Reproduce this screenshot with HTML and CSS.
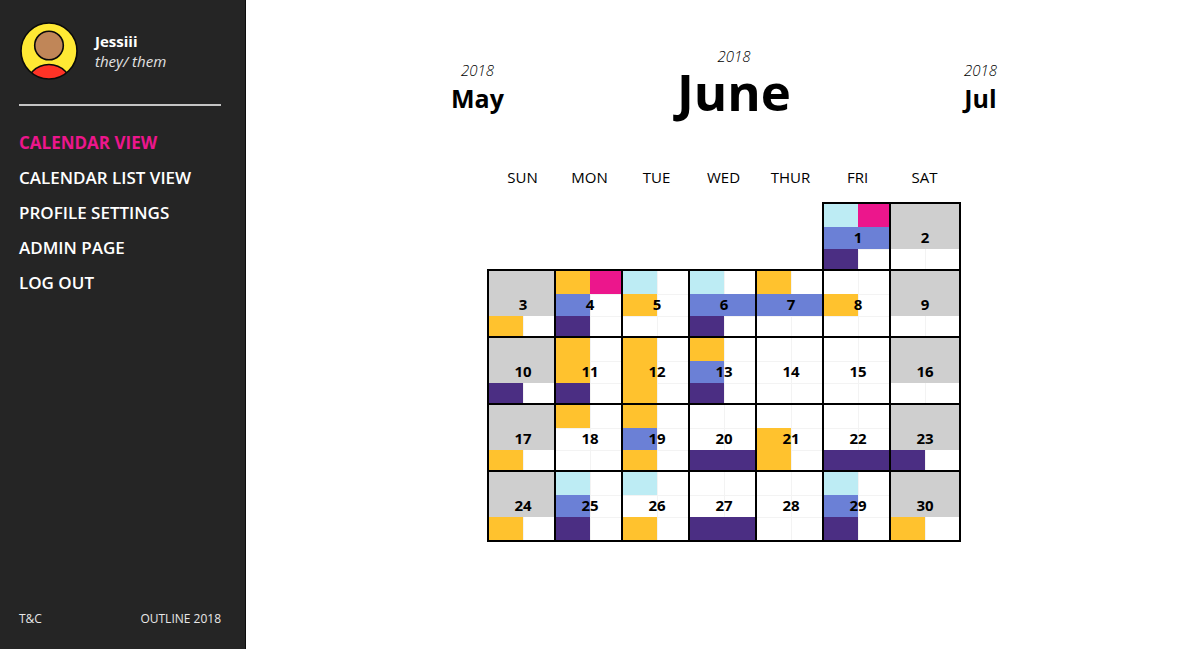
FILE: index.html
```html
<!DOCTYPE html>
<html lang="en">
<head>
<meta charset="utf-8">
<meta name="viewport" content="width=device-width, initial-scale=1">
<title>Calendar View</title>
<link rel="stylesheet" href="styles.css">
</head>
<body>
<aside class="sidebar">
  <header class="profile">
    <svg class="avatar" viewBox="0 0 58 58" aria-hidden="true">
      <defs><clipPath id="face"><circle cx="29" cy="29" r="28"/></clipPath></defs>
      <circle cx="29" cy="29" r="28" fill="#ffe934"/>
      <circle cx="29" cy="65.500" r="23" fill="#ff3326" stroke="#0a0a0a" stroke-width="1.600" clip-path="url(#face)"/>
      <circle cx="29" cy="23.500" r="14.300" fill="#c08658" stroke="#0a0a0a" stroke-width="1.600"/>
      <circle cx="29" cy="29" r="28" fill="none" stroke="#0a0a0a" stroke-width="1.600"/>
    </svg>
    <div>
      <p class="name">Jessiii</p>
      <p class="pronouns">they/ them</p>
    </div>
  </header>
  <nav class="menu">
    <a class="active" href="#calendar" aria-current="page">CALENDAR VIEW</a>
    <a href="#list">CALENDAR LIST VIEW</a>
    <a href="#profile">PROFILE SETTINGS</a>
    <a href="#admin">ADMIN PAGE</a>
    <a href="#logout">LOG OUT</a>
  </nav>
  <footer class="legal">
    <a href="#terms">T&amp;C</a>
    <span>OUTLINE 2018</span>
  </footer>
</aside>
<main class="content">
  <header class="months">
    <button type="button" class="month"><span class="year">2018</span><span class="month-name">May</span></button>
    <h1 class="month current"><span class="year">2018</span><span class="month-name">June</span></h1>
    <button type="button" class="month"><span class="year">2018</span><span class="month-name">Jul</span></button>
  </header>
  <table class="calendar">
    <thead>
      <tr><th>SUN</th><th>MON</th><th>TUE</th><th>WED</th><th>THUR</th><th>FRI</th><th>SAT</th></tr>
    </thead>
    <tbody>
      <tr>
        <td></td><td></td><td></td><td></td><td></td>
        <td><div class="day"><i class="top cyan"></i><i class="top right pink"></i><i class="mid full blue"></i><i class="low purple"></i><b>1</b></div></td>
        <td><div class="day weekend"><b>2</b></div></td>
      </tr>
      <tr>
        <td><div class="day weekend"><i class="low amber"></i><b>3</b></div></td>
        <td><div class="day"><i class="top amber"></i><i class="top right pink"></i><i class="mid blue"></i><i class="low purple"></i><b>4</b></div></td>
        <td><div class="day"><i class="top cyan"></i><i class="mid amber"></i><b>5</b></div></td>
        <td><div class="day"><i class="top cyan"></i><i class="mid full blue"></i><i class="low purple"></i><b>6</b></div></td>
        <td><div class="day"><i class="top amber"></i><i class="mid full blue"></i><b>7</b></div></td>
        <td><div class="day"><i class="mid amber"></i><b>8</b></div></td>
        <td><div class="day weekend"><b>9</b></div></td>
      </tr>
      <tr>
        <td><div class="day weekend"><i class="low purple"></i><b>10</b></div></td>
        <td><div class="day"><i class="top amber"></i><i class="mid amber"></i><i class="low purple"></i><b>11</b></div></td>
        <td><div class="day"><i class="top amber"></i><i class="mid amber"></i><i class="low amber"></i><b>12</b></div></td>
        <td><div class="day"><i class="top amber"></i><i class="mid blue"></i><i class="low purple"></i><b>13</b></div></td>
        <td><div class="day"><b>14</b></div></td>
        <td><div class="day"><b>15</b></div></td>
        <td><div class="day weekend"><b>16</b></div></td>
      </tr>
      <tr>
        <td><div class="day weekend"><i class="low amber"></i><b>17</b></div></td>
        <td><div class="day"><i class="top amber"></i><b>18</b></div></td>
        <td><div class="day"><i class="top amber"></i><i class="mid blue"></i><i class="low amber"></i><b>19</b></div></td>
        <td><div class="day"><i class="low full purple"></i><b>20</b></div></td>
        <td><div class="day"><i class="mid amber"></i><i class="low amber"></i><b>21</b></div></td>
        <td><div class="day"><i class="low full purple"></i><b>22</b></div></td>
        <td><div class="day weekend"><i class="low purple"></i><b>23</b></div></td>
      </tr>
      <tr>
        <td><div class="day weekend"><i class="low amber"></i><b>24</b></div></td>
        <td><div class="day"><i class="top cyan"></i><i class="mid blue"></i><i class="low purple"></i><b>25</b></div></td>
        <td><div class="day"><i class="top cyan"></i><i class="low amber"></i><b>26</b></div></td>
        <td><div class="day"><i class="low full purple"></i><b>27</b></div></td>
        <td><div class="day"><b>28</b></div></td>
        <td><div class="day"><i class="top cyan"></i><i class="mid blue"></i><i class="low purple"></i><b>29</b></div></td>
        <td><div class="day weekend"><i class="low amber"></i><b>30</b></div></td>
      </tr>
    </tbody>
  </table>
</main>
</body>
</html>
```
FILE: styles.css
```css
* {
  box-sizing: border-box;
}

body {
  margin: 0;
  min-height: 100vh;
  display: flex;
  font-family: "Open Sans", "Noto Sans", sans-serif;
  color: #000;
  background: #fff;
}

p {
  margin: 0;
}

a {
  color: inherit;
  text-decoration: none;
}

.sidebar {
  flex: 0 0 246px;
  display: flex;
  flex-direction: column;
  padding: 22px 24px 20px 19px;
  border-right: 1px solid #0c0c0c;
  background: #252525;
  color: #fff;
}

.profile {
  display: flex;
  align-items: center;
  gap: 17px;
  padding: 0 0 24px 1px;
  border-bottom: 2px solid #c4c4c4;
  font-size: 15px;
  line-height: 20px;
}

.avatar {
  width: 58px;
  height: 58px;
}

.name {
  font-weight: 700;
}

.pronouns {
  font-style: italic;
  color: #e2e2e2;
}

.menu {
  display: flex;
  flex-direction: column;
  gap: 11px;
  padding-top: 25px;
  font-size: 17px;
  line-height: 24px;
  font-weight: 600;
}

.active {
  color: #ec168c;
  font-weight: 700;
}

.legal {
  display: flex;
  justify-content: space-between;
  margin-top: auto;
  font-size: 12px;
  line-height: 20px;
  color: #e8e8e8;
}

.content {
  flex: 1;
  display: flex;
  flex-direction: column;
  align-items: center;
}

.months {
  width: 100%;
  max-width: 548px;
  display: flex;
  justify-content: space-between;
  align-items: flex-end;
  padding: 44px 0 0 2px;
}

.month {
  display: flex;
  flex-direction: column;
  align-items: center;
  margin: 0;
  padding: 0;
  border: 0;
  background: none;
  color: inherit;
  font: inherit;
}

.year {
  font-size: 15px;
  line-height: 24px;
  font-style: italic;
  font-weight: 300;
}

.month-name {
  font-size: 25px;
  line-height: 32px;
  font-weight: 700;
}

.current .month-name {
  font-size: 51px;
  line-height: 46px;
  font-weight: 700;
}

.calendar {
  margin-top: 52px;
  padding-right: 3px;
  border-collapse: separate;
  border-spacing: 0;
}

.calendar th {
  height: 36px;
  padding: 0 0 14px 4px;
  font-size: 15px;
  line-height: 20px;
  font-weight: 500;
}

.calendar td {
  width: 67px;
  min-width: 67px;
  height: 67px;
  padding: 0;
}

/* Neighbouring days share a border: each box reaches over the next cell's edge. */
.day {
  position: relative;
  display: grid;
  grid-template: 23px 22px 23px / 34px 34px;
  width: 72px;
  margin: 0 -5px -5px 0;
  border: 2px solid #000;
  background:
    linear-gradient(#f3f3f3, #f3f3f3) 34px 0 / 1px 100% no-repeat,
    linear-gradient(#f3f3f3, #f3f3f3) 0 23px / 100% 1px no-repeat,
    linear-gradient(#f3f3f3, #f3f3f3) 0 45px / 100% 1px no-repeat,
    #fff;
}

.weekend {
  background:
    linear-gradient(#cfcfcf, #cfcfcf) 0 0 / 100% 45px no-repeat,
    linear-gradient(#f3f3f3, #f3f3f3) 34px 0 / 1px 100% no-repeat,
    #fff;
}

.day b {
  grid-area: 1 / 1 / -1 / -1;
  padding-top: 23px;
  text-align: center;
  font-size: 15px;
  line-height: 20px;
  font-weight: 700;
}

.top { grid-row: 1; grid-column: 1; }
.mid { grid-row: 2; grid-column: 1; }
.low { grid-row: 3; grid-column: 1; }
.right { grid-column: 2; }
.full { grid-column: 1 / -1; }

.cyan { background: #bdecf4; }
.pink { background: #ec168c; }
.blue { background: #6b80d6; }
.purple { background: #4b2e83; }
.amber { background: #ffc22e; }
```
